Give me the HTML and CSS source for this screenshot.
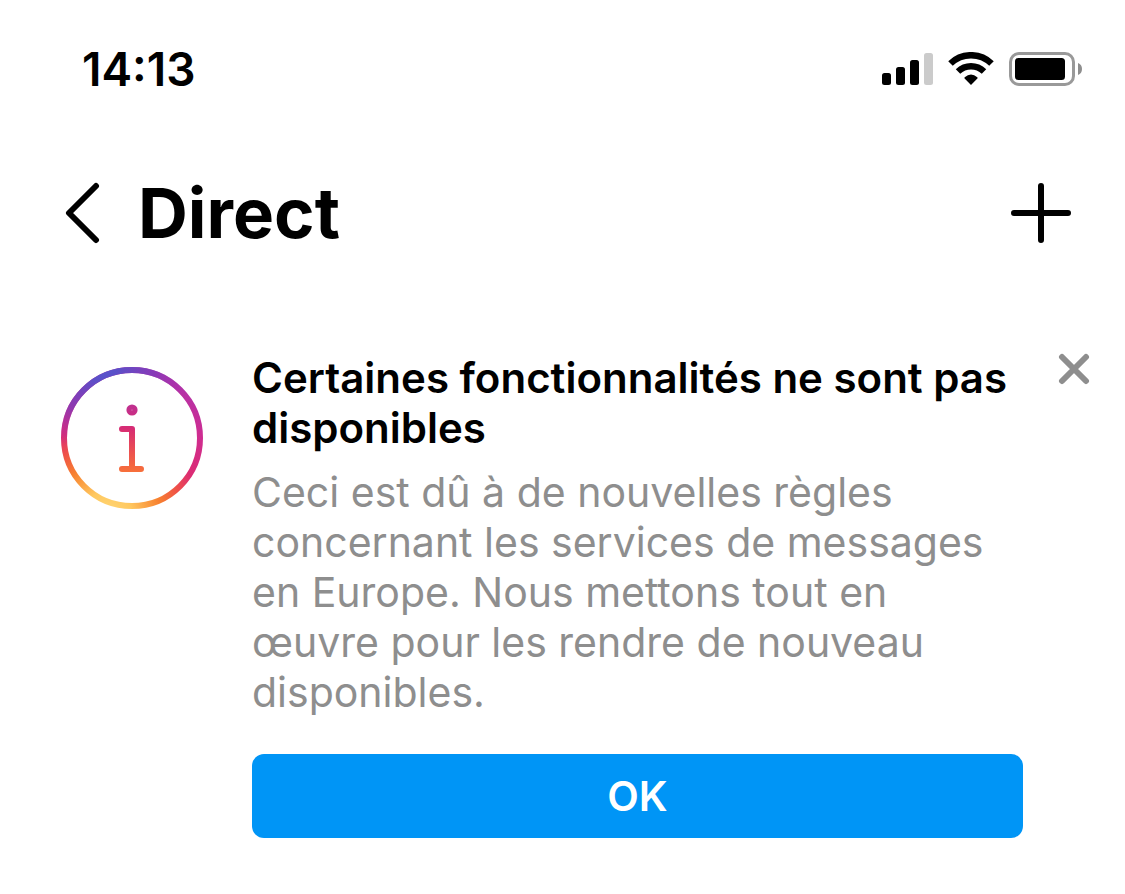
FILE: index.html
```html
<!DOCTYPE html>
<html lang="fr">
<head>
  <meta charset="UTF-8">
  <meta name="viewport" content="width=device-width, initial-scale=1.0">
  <title>Direct</title>
  <link rel="stylesheet" href="styles.css">
</head>
<body>

  <!-- Barre d'état -->
  <div class="status-bar">
    <span class="heure">14:13</span>
    <div class="status-icons">
      <svg width="51" height="34" viewBox="0 0 51 34" aria-hidden="true">
        <rect x="0" y="21" width="9" height="12" rx="2.5"/>
        <rect x="14" y="15" width="9" height="18" rx="2.5"/>
        <rect x="28" y="8" width="9" height="25" rx="2.5"/>
        <rect x="42" y="1" width="9" height="32" rx="2.5" fill="#cbcbcb"/>
      </svg>
      <svg width="46" height="34" viewBox="0 0 46 34" aria-hidden="true">
        <g fill="none" stroke="#000" stroke-width="6.5">
          <path d="M2.500 11.500A29.500 29.500 0 0 1 43.500 11.500"/>
          <path d="M10 19.500A19 19 0 0 1 36 19.500"/>
        </g>
        <path d="M23 33L16.6 26.6Q16 26 16.7 25.2Q23 20 29.3 25.2Q30 26 29.4 26.6Z"/>
      </svg>
      <svg width="74" height="34" viewBox="0 0 74 34" aria-hidden="true">
        <rect x="1.5" y="1.5" width="63" height="31" rx="8.5" fill="none" stroke="#999" stroke-width="3"/>
        <rect x="6" y="6" width="50" height="22" rx="3.5"/>
        <path d="M69 11Q73 12.5 73 17T69 23Z" fill="#8e8e8e"/>
      </svg>
    </div>
  </div>

  <!-- En-tête -->
  <header class="header">
    <button class="btn-icone" type="button" aria-label="Retour">
      <svg width="36" height="62" viewBox="0 0 36 62"><path d="M32 4L5 31L32 58"/></svg>
    </button>
    <h1>Direct</h1>
    <button class="btn-icone" type="button" aria-label="Nouveau message">
      <svg width="60" height="60" viewBox="0 0 60 60"><path d="M30 3V57M3 30H57"/></svg>
    </button>
  </header>

  <!-- Message d'information -->
  <main class="notice">
    <svg class="notice-icone" width="142" height="142" viewBox="0 0 142 142" aria-hidden="true">
      <defs>
        <radialGradient id="chaud" gradientUnits="userSpaceOnUse" cx="46" cy="150" r="150">
          <stop offset="0" stop-color="#ffd97a"/>
          <stop offset="0.17" stop-color="#ffc85f"/>
          <stop offset="0.36" stop-color="#f7812f"/>
          <stop offset="0.5" stop-color="#ef5148"/>
          <stop offset="0.62" stop-color="#dc2c73"/>
          <stop offset="0.82" stop-color="#cf2c90"/>
          <stop offset="1" stop-color="#b432a8"/>
        </radialGradient>
        <radialGradient id="froid" gradientUnits="userSpaceOnUse" cx="40" cy="-6" r="92">
          <stop offset="0" stop-color="#5758d0"/>
          <stop offset="0.2" stop-color="#5b50c8"/>
          <stop offset="0.6" stop-color="#7a3cbc" stop-opacity="0.75"/>
          <stop offset="1" stop-color="#a030b0" stop-opacity="0"/>
        </radialGradient>
        <linearGradient id="lettre" gradientUnits="userSpaceOnUse" x1="71" y1="38" x2="71" y2="105">
          <stop offset="0" stop-color="#bf3090"/>
          <stop offset="0.35" stop-color="#d72c74"/>
          <stop offset="0.7" stop-color="#ec5150"/>
          <stop offset="1" stop-color="#f7703a"/>
        </linearGradient>
      </defs>
      <circle cx="71" cy="71" r="68" stroke="url(#chaud)"/>
      <circle cx="71" cy="71" r="68" stroke="url(#froid)"/>
      <circle cx="71" cy="43" r="2.6" stroke="url(#lettre)"/>
      <path d="M61 62H71V102M61 102H80" stroke="url(#lettre)"/>
    </svg>

    <div class="notice-contenu">
      <h2>Certaines fonctionnalités ne sont pas disponibles</h2>
      <p>Ceci est dû à de nouvelles règles concernant les services de messages en Europe. Nous mettons tout en œuvre pour les rendre de nouveau disponibles.</p>
      <button class="btn-ok" type="button">OK</button>
    </div>

    <button class="btn-icone btn-fermer" type="button" aria-label="Fermer">
      <svg width="32" height="32" viewBox="0 0 32 32"><path d="M4 4L28 28M28 4L4 28"/></svg>
    </button>
  </main>

</body>
</html>
```
FILE: styles.css
```css
* {
  box-sizing: border-box;
}

body {
  margin: 0;
  background: #fff;
  color: #000;
  font-family: Inter, 'Liberation Sans', sans-serif;
}

svg {
  display: block;
}

h1, h2, p {
  margin: 0;
}

button {
  padding: 0;
  border: none;
  font-family: inherit;
  cursor: pointer;
}

.status-bar {
  display: flex;
  align-items: center;
  justify-content: space-between;
  padding: 44px 42px 0 82px;
}

.heure {
  font-size: 46px;
  font-weight: 600;
  line-height: 50px;
}

.status-icons {
  display: flex;
  gap: 15px;
}

.header {
  display: flex;
  align-items: center;
  padding: 77px 54px 0 64px;
}

.header h1 {
  flex: 1;
  padding-left: 38px;
  font-size: 69px;
  font-weight: 700;
  line-height: 84px;
}

.btn-icone {
  flex: none;
  background: none;
}

.btn-icone path {
  fill: none;
  stroke: #000;
  stroke-width: 6;
  stroke-linecap: round;
  stroke-linejoin: round;
}

.notice {
  display: flex;
  align-items: flex-start;
  padding: 98px 35px 56px 61px;
}

.notice-icone {
  flex: none;
  margin-top: 14px;
  fill: none;
  stroke-width: 6;
  stroke-linecap: round;
  stroke-linejoin: round;
}

.notice-contenu {
  flex: 1;
  margin: 0 35px 0 49px;
}

.notice h2 {
  font-size: 42px;
  font-weight: 600;
  line-height: 50px;
}

.notice p {
  padding-top: 14px;
  color: #8e8e8e;
  font-size: 41px;
  line-height: 50px;
}

.btn-ok {
  display: block;
  width: 100%;
  margin-top: 37px;
  padding: 17px 0;
  border-radius: 12px;
  background: #0095f6;
  color: #fff;
  font-size: 41px;
  font-weight: 600;
  line-height: 50px;
}

.btn-fermer path {
  stroke: #8e8e8e;
}
```
